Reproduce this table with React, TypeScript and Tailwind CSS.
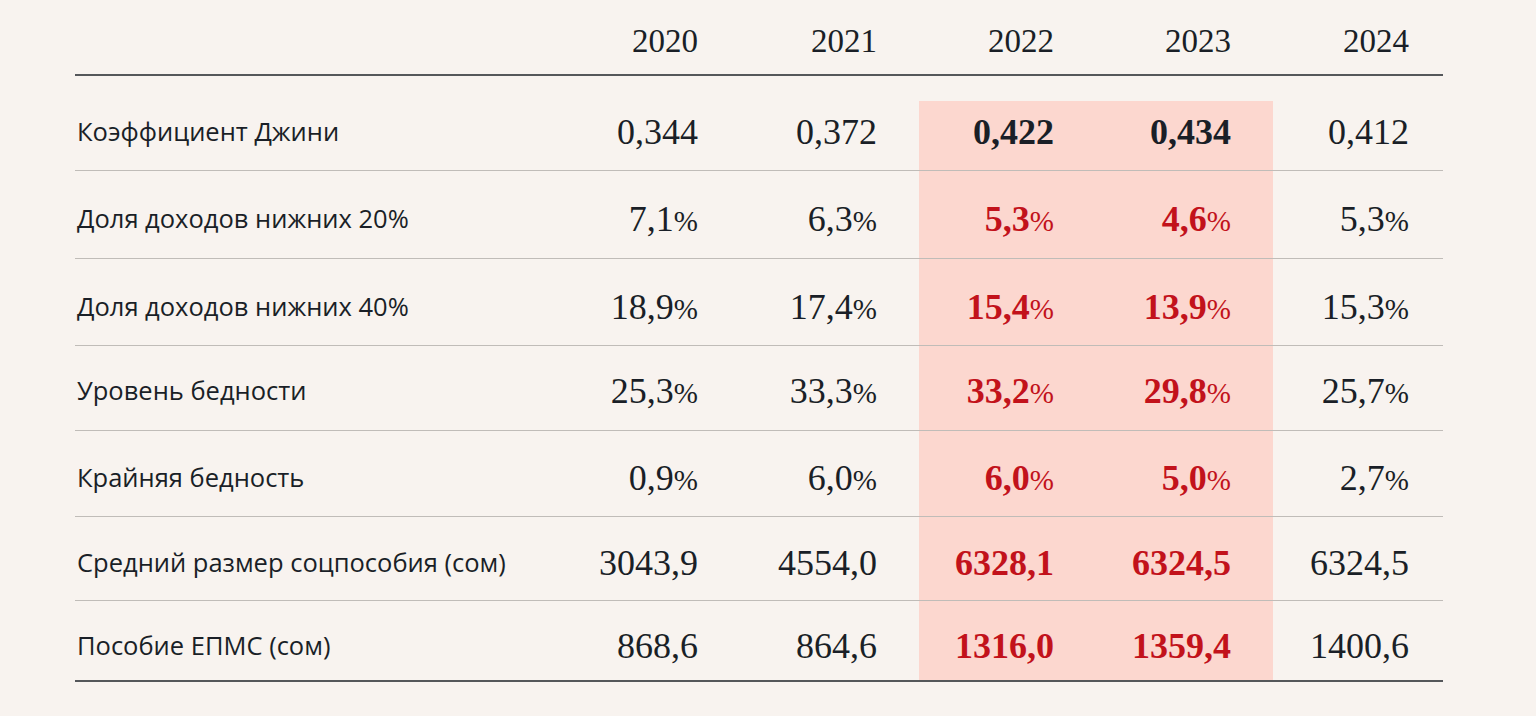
const years = ['2020', '2021', '2022', '2023', '2024']

type Row = { label: string; values: string[]; pct?: boolean; bold?: boolean; h: string; pad: string }

const rows: Row[] = [
  { label: 'Коэффициент Джини', values: ['0,344', '0,372', '0,422', '0,434', '0,412'], bold: true, h: 'h-[70px]', pad: 'pb-[8px]' },
  { label: 'Доля доходов нижних 20%', values: ['7,1', '6,3', '5,3', '4,6', '5,3'], pct: true, h: 'h-[88px]', pad: 'pt-[8px]' },
  { label: 'Доля доходов нижних 40%', values: ['18,9', '17,4', '15,4', '13,9', '15,3'], pct: true, h: 'h-[87px]', pad: 'pt-[10px]' },
  { label: 'Уровень бедности', values: ['25,3', '33,3', '33,2', '29,8', '25,7'], pct: true, h: 'h-[85px]', pad: 'pt-[6px]' },
  { label: 'Крайняя бедность', values: ['0,9', '6,0', '6,0', '5,0', '2,7'], pct: true, h: 'h-[86px]', pad: 'pt-[8px]' },
  { label: 'Средний размер соцпособия (сом)', values: ['3043,9', '4554,0', '6328,1', '6324,5', '6324,5'], h: 'h-[84px]', pad: 'pt-[8px]' },
  { label: 'Пособие ЕПМС (сом)', values: ['868,6', '864,6', '1316,0', '1359,4', '1400,6'], h: 'h-[81px]', pad: 'pt-[10px]' },
]

const grid = 'grid grid-cols-[485px_180px_179px_177px_177px_168px]'
const serif = "font-['Liberation_Serif','DejaVu_Serif',serif]"

function Cell({ value, idx, row }: { value: string; idx: number; row: Row }) {
  const hot = idx === 2 || idx === 3
  const color = hot && !row.bold ? 'text-[#c2121b]' : 'text-[#1a1f27]'
  const weight = hot ? 'font-bold' : 'font-normal'
  return (
    <div
      className={`flex items-center justify-end ${row.pad} ${idx === 4 ? 'pr-[32px]' : 'pr-[42px]'} ${
        hot ? 'bg-[#fcd7cf]' : ''
      }`}
    >
      <span className={`${serif} text-[36px] leading-none ${color} ${weight}`}>
        {value}
        {row.pct && <span className="text-[29px] font-normal">%</span>}
      </span>
    </div>
  )
}

export default function App() {
  return (
    <div className="min-h-screen w-full bg-[#f8f3ef]">
      <div className="ml-[75px] w-[1368px]">
        {/* Header */}
        <div className={`${grid} h-[76px] border-b-2 border-[#55575a]`}>
          <div />
          {years.map((y, i) => (
            <div
              key={y}
              className={`flex items-center justify-end pt-[8px] ${i === 4 ? 'pr-[32px]' : 'pr-[42px]'}`}
            >
              <span className={`${serif} text-[33px] leading-none text-[#1a1f27]`}>{y}</span>
            </div>
          ))}
        </div>

        {/* Body */}
        <div className="pt-[25px]">
          {rows.map((row, r) => (
            <div
              key={row.label}
              className={`${grid} ${row.h} ${
                r === rows.length - 1 ? 'border-b-2 border-[#55575a]' : 'border-b border-[#c0bcb8]'
              }`}
            >
              <div className={`flex items-center pl-[2px] ${row.pad}`}>
                <span className="font-['Open_Sans','Noto_Sans',sans-serif] text-[25.5px] leading-none text-[#1a1f27]">
                  {row.label}
                </span>
              </div>
              {row.values.map((v, i) => (
                <Cell key={i} value={v} idx={i} row={row} />
              ))}
            </div>
          ))}
        </div>
      </div>
    </div>
  )
}
